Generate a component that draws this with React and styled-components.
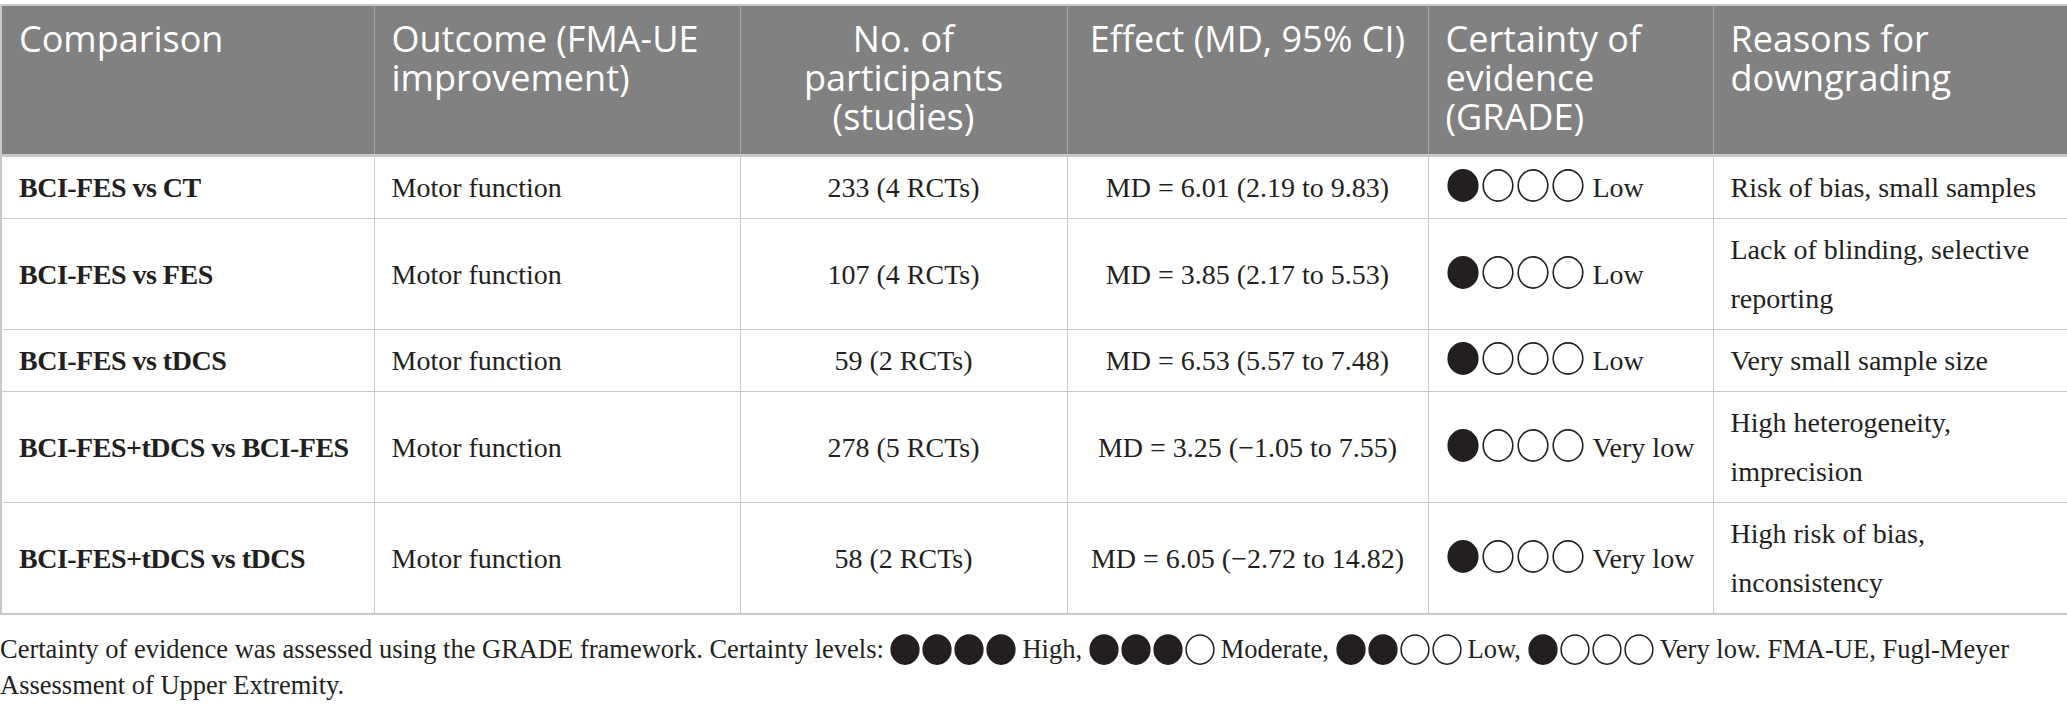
import styled, { createGlobalStyle } from 'styled-components'

const GlobalStyle = createGlobalStyle`
  html, body {
    margin: 0;
    padding: 0;
    background: #ffffff;
  }
`

const colors = {
  head: '#808180',
  headLine: '#a4a5a4',
  line: '#c8c8c8',
  ink: '#231f20',
}

const Page = styled.div`
  width: 2067px;
  padding-top: 4px;
  color: ${colors.ink};
  font-family: 'Liberation Serif', 'Times New Roman', serif;
`

const Table = styled.table`
  width: 2067px;
  table-layout: fixed;
  border-collapse: collapse;
  border: 2px solid ${colors.line};
`

const HeadCell = styled.th`
  background: ${colors.head};
  color: #ffffff;
  font-family: 'Open Sans', 'DejaVu Sans', sans-serif;
  font-weight: 400;
  font-size: 36px;
  line-height: 39px;
  text-align: ${(p) => p.$align || 'left'};
  vertical-align: top;
  padding: 13px 17px 18px;
  border-left: 1px solid ${colors.headLine};
  border-bottom: 3px solid ${colors.line};
`

const Cell = styled.td`
  font-size: 28px;
  line-height: 49px;
  font-weight: ${(p) => (p.$bold ? 700 : 400)};
  letter-spacing: ${(p) => (p.$bold ? '-0.5px' : 'normal')};
  white-space: ${(p) => (p.$bold ? 'nowrap' : 'normal')};
  text-align: ${(p) => p.$align || 'left'};
  vertical-align: middle;
  padding: 6px 17px;
  border: 1px solid ${colors.line};
`

const Grade = styled.div`
  display: flex;
  align-items: center;
  gap: 9px;
  padding-left: 1px;
`

const DotRow = styled.span`
  display: inline-flex;
  align-items: center;
  gap: ${(p) => p.$gap}px;
  vertical-align: middle;
  margin-right: ${(p) => p.$spaced || 0}px;
  position: relative;
  top: -2px;
`

const Footnote = styled.p`
  margin: 16px 0 0;
  font-size: 26.5px;
  line-height: 36px;
`

const NoWrap = styled.span`
  white-space: nowrap;
`

const Dots = ({ filled, size = 32, gap = 3, spaced }) => (
  <DotRow $gap={gap} $spaced={spaced}>
    {[0, 1, 2, 3].map((i) => (
      <svg key={i} width={size} height={size + 1} viewBox="0 0 32 33">
        <ellipse
          cx="16"
          cy="16.5"
          rx="14.8"
          ry="15.6"
          fill={i < filled ? colors.ink : '#ffffff'}
          stroke={colors.ink}
          strokeWidth="1.6"
        />
      </svg>
    ))}
  </DotRow>
)

const rows = [
  {
    comparison: 'BCI-FES vs CT',
    participants: '233 (4 RCTs)',
    effect: 'MD = 6.01 (2.19 to 9.83)',
    grade: 'Low',
    reasons: 'Risk of bias, small samples',
  },
  {
    comparison: 'BCI-FES vs FES',
    participants: '107 (4 RCTs)',
    effect: 'MD = 3.85 (2.17 to 5.53)',
    grade: 'Low',
    reasons: 'Lack of blinding, selective reporting',
  },
  {
    comparison: 'BCI-FES vs tDCS',
    participants: '59 (2 RCTs)',
    effect: 'MD = 6.53 (5.57 to 7.48)',
    grade: 'Low',
    reasons: 'Very small sample size',
  },
  {
    comparison: 'BCI-FES+tDCS vs BCI-FES',
    participants: '278 (5 RCTs)',
    effect: 'MD = 3.25 (\u22121.05 to 7.55)',
    grade: 'Very low',
    reasons: 'High heterogeneity, imprecision',
  },
  {
    comparison: 'BCI-FES+tDCS vs tDCS',
    participants: '58 (2 RCTs)',
    effect: 'MD = 6.05 (\u22122.72 to 14.82)',
    grade: 'Very low',
    reasons: 'High risk of bias, inconsistency',
  },
]

const widths = [373, 366, 327, 361, 285, 355]

const App = () => {
  return (
    <Page>
      <GlobalStyle />
      <Table>
        <colgroup>
          {widths.map((w, i) => (
            <col key={i} style={{ width: w }} />
          ))}
        </colgroup>
        <thead>
          <tr>
            <HeadCell>Comparison</HeadCell>
            <HeadCell>Outcome (FMA-UE improvement)</HeadCell>
            <HeadCell $align="center">No. of participants (studies)</HeadCell>
            <HeadCell $align="center">Effect (MD, 95% CI)</HeadCell>
            <HeadCell>Certainty of evidence (GRADE)</HeadCell>
            <HeadCell>Reasons for downgrading</HeadCell>
          </tr>
        </thead>
        <tbody>
          {rows.map((r) => (
            <tr key={r.comparison}>
              <Cell $bold>{r.comparison}</Cell>
              <Cell>Motor function</Cell>
              <Cell $align="center">{r.participants}</Cell>
              <Cell $align="center">{r.effect}</Cell>
              <Cell>
                <Grade>
                  <Dots filled={1} />
                  {r.grade}
                </Grade>
              </Cell>
              <Cell>{r.reasons}</Cell>
            </tr>
          ))}
        </tbody>
      </Table>
      <Footnote>
        Certainty of evidence was assessed using the GRADE framework. Certainty
        levels: <Dots filled={4} size={30} gap={2} spaced={6} />
        High, <Dots filled={3} size={30} gap={2} spaced={6} />
        Moderate, <Dots filled={2} size={30} gap={2} spaced={6} />
        Low, <Dots filled={1} size={30} gap={2} spaced={6} />
        Very low. FMA-UE, <NoWrap>Fugl-Meyer</NoWrap> Assessment of Upper
        Extremity.
      </Footnote>
    </Page>
  )
}

export default App
